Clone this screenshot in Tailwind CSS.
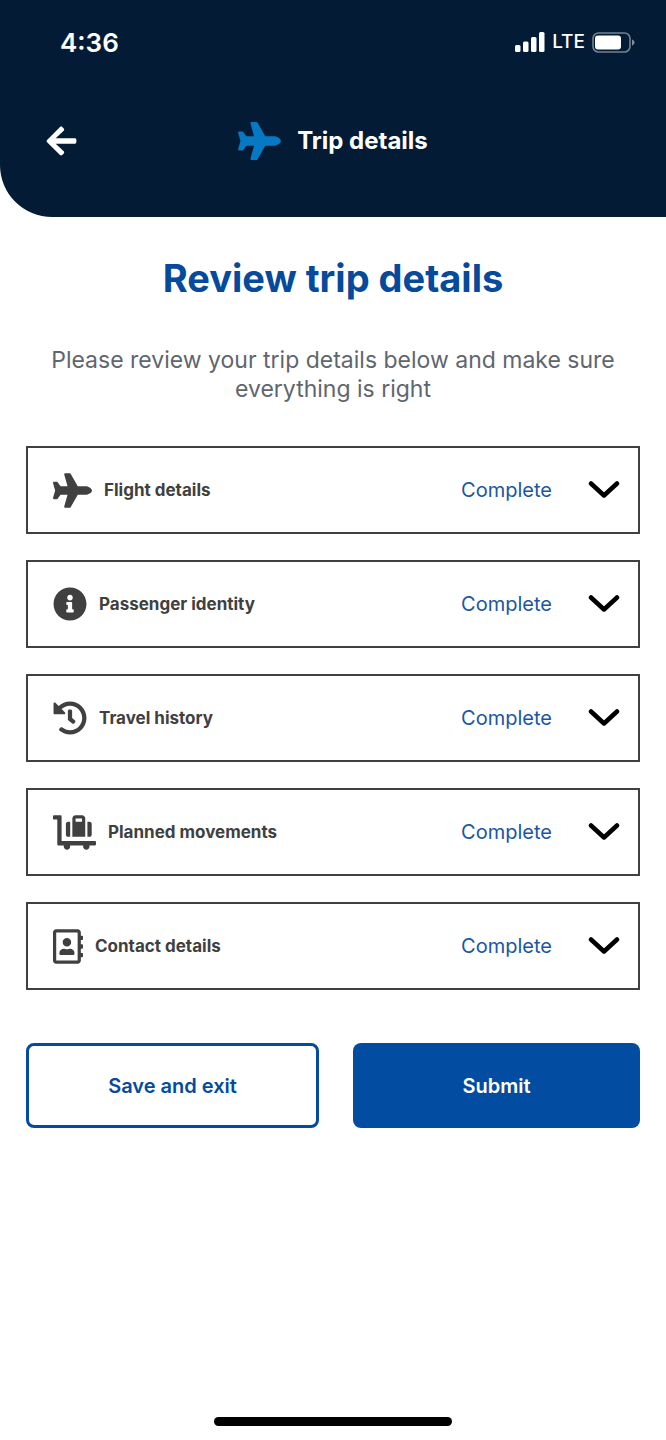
<!DOCTYPE html>
<html lang="en">

<head>
    <meta charset="UTF-8">
    <meta name="viewport" content="width=device-width, initial-scale=1.0">
    <script src="https://cdn.jsdelivr.net/npm/@tailwindcss/browser@4"></script>
    <title>Trip details</title>
</head>

<body class="font-['Inter',sans-serif] bg-white">

    <!-- shared icon shapes -->
    <svg class="hidden">
        <symbol id="plane" viewBox="0 0 576 512">
            <path d="M480 192H365.71L260.61 8.06A16.014 16.014 0 0 0 246.71 0h-65.5c-10.63 0-18.3 10.17-15.38 20.39L214.86 192H112l-43.2-57.6c-3.02-4.03-7.77-6.4-12.8-6.4H16.01C5.6 128-2.04 137.78.49 147.88L32 256 .49 364.12C-2.04 374.22 5.6 384 16.01 384H56c5.04 0 9.78-2.37 12.8-6.4L112 320h102.86l-49.03 171.6c-2.92 10.22 4.75 20.4 15.38 20.4h65.5c5.74 0 11.04-3.08 13.89-8.06L365.71 320H480c35.35 0 96-28.65 96-64s-60.65-64-96-64z" />
        </symbol>
        <symbol id="chevron" viewBox="0 0 32 18">
            <path d="M3 2.500l13 12L29 2.500" fill="none" stroke="currentColor" stroke-width="4.500" stroke-linecap="round" stroke-linejoin="round" />
        </symbol>
    </svg>

    <div class="flex flex-col min-h-screen">
        <header class="bg-[#041b35] text-white rounded-bl-[52px] pt-6 pb-14">
            <div class="flex items-center justify-between pl-[60px] pr-[31px] h-9">
                <span class="text-[26px] font-semibold">4:36</span>
                <div class="flex items-center gap-[7px]">
                    <svg class="w-[30px] h-5" viewBox="0 0 30 20" fill="currentColor">
                        <rect x="0" y="13" width="5.5" height="7" rx="1.5" />
                        <rect x="8" y="9.5" width="5.5" height="10.5" rx="1.5" />
                        <rect x="16" y="5" width="5.5" height="15" rx="1.5" />
                        <rect x="24" y="0" width="5.5" height="20" rx="1.5" />
                    </svg>
                    <span class="text-[19px] leading-7 font-medium">LTE</span>
                    <svg class="w-[43px] h-[21px]" viewBox="0 0 43 21">
                        <rect x="1" y="1" width="37" height="19" rx="5.5" fill="none" stroke="#fff" stroke-opacity=".45" stroke-width="1.6" />
                        <rect x="3" y="3.5" width="26" height="14" rx="3" fill="#fff" />
                        <path d="M40 7.5c1.6.6 2.5 1.7 2.5 3s-.9 2.4-2.5 3z" fill="#fff" fill-opacity=".5" />
                    </svg>
                </div>
            </div>

            <div class="grid grid-cols-[1fr_auto_1fr] items-center mt-[60px] px-[46px] h-[41px]">
                <button type="button" aria-label="Back" class="justify-self-start">
                    <svg class="w-[31px] h-[34px]" viewBox="0 0 448 512" fill="currentColor">
                        <path d="M257.5 445.1l-22.2 22.2c-9.4 9.4-24.6 9.4-33.9 0L7 273c-9.4-9.4-9.4-24.6 0-33.9L201.4 44.7c9.4-9.4 24.6-9.4 33.9 0l22.2 22.2c9.5 9.5 9.3 25-.4 34.3L136.6 216H424c13.3 0 24 10.7 24 24v32c0 13.3-10.7 24-24 24H136.6l120.5 114.8c9.8 9.3 10 24.8.4 34.3z" />
                    </svg>
                </button>
                <div class="flex items-center gap-4">
                    <svg class="w-[43px] h-[38px] text-[#0679c5]" fill="currentColor"><use href="#plane" /></svg>
                    <span class="text-2xl font-bold">Trip details</span>
                </div>
            </div>
        </header>

        <main class="px-[26px] pt-[38px]">
            <h1 class="text-center text-[38px] leading-[46px] font-bold text-[#054a9c]">Review trip details</h1>
            <p class="text-center text-[23px] leading-[29px] text-[#5f666d] mt-[45px] px-4">Please review your trip details below and make sure everything is right</p>

            <div class="flex flex-col gap-[26px] mt-[42px]">
                <button type="button" class="flex items-center h-[88px] border-2 border-[#404040] pl-[25px] pr-[18px] text-[#404040]">
                    <svg class="w-[39px] h-[35px]" fill="currentColor"><use href="#plane" /></svg>
                    <span class="ml-3 text-[17px] leading-6 font-bold">Flight details</span>
                    <span class="ml-auto text-xl text-[#1a56a2]">Complete</span>
                    <svg class="ml-9 w-8 h-[18px] text-black"><use href="#chevron" /></svg>
                </button>

                <button type="button" class="flex items-center h-[88px] border-2 border-[#404040] pl-[25px] pr-[18px] text-[#404040]">
                    <svg class="w-[34px] h-[34px]" viewBox="0 0 512 512" fill="currentColor">
                        <path d="M256 8C119.043 8 8 119.083 8 256c0 136.997 111.043 248 248 248s248-111.003 248-248C504 119.083 392.957 8 256 8zm0 110c23.196 0 42 18.804 42 42s-18.804 42-42 42-42-18.804-42-42 18.804-42 42-42zm56 254c0 6.627-5.373 12-12 12h-88c-6.627 0-12-5.373-12-12v-24c0-6.627 5.373-12 12-12h12v-64h-12c-6.627 0-12-5.373-12-12v-24c0-6.627 5.373-12 12-12h64c6.627 0 12 5.373 12 12v100h12c6.627 0 12 5.373 12 12v24z" />
                    </svg>
                    <span class="ml-3 text-[17px] leading-6 font-bold">Passenger identity</span>
                    <span class="ml-auto text-xl text-[#1a56a2]">Complete</span>
                    <svg class="ml-9 w-8 h-[18px] text-black"><use href="#chevron" /></svg>
                </button>

                <button type="button" class="flex items-center h-[88px] border-2 border-[#404040] pl-[25px] pr-[18px] text-[#404040]">
                    <svg class="w-[34px] h-[34px]" viewBox="0 0 512 512" fill="currentColor">
                        <path d="M504 255.531c.253 136.64-111.18 248.372-247.82 248.468-59.015.042-113.223-20.53-155.822-54.911-11.077-8.94-11.905-25.541-1.839-35.607l11.267-11.267c8.609-8.609 22.353-9.551 31.891-1.984C173.062 425.135 212.781 440 256 440c101.705 0 184-82.311 184-184 0-101.705-82.311-184-184-184-48.814 0-93.149 18.969-126.068 49.932l50.754 50.754c10.08 10.08 2.941 27.314-11.313 27.314H24c-8.837 0-16-7.163-16-16V38.627c0-14.254 17.234-21.393 27.314-11.314l49.372 49.372C129.209 34.136 189.552 8 256 8c136.81 0 247.747 110.78 248 247.531zm-180.912 78.784l9.823-12.63c8.138-10.463 6.253-25.542-4.21-33.679L288 256.349V152c0-13.255-10.745-24-24-24h-16c-13.255 0-24 10.745-24 24v135.651l65.409 50.874c10.463 8.137 25.541 6.253 33.679-4.21z" />
                    </svg>
                    <span class="ml-3 text-[17px] leading-6 font-bold">Travel history</span>
                    <span class="ml-auto text-xl text-[#1a56a2]">Complete</span>
                    <svg class="ml-9 w-8 h-[18px] text-black"><use href="#chevron" /></svg>
                </button>

                <button type="button" class="flex items-center h-[88px] border-2 border-[#404040] pl-[25px] pr-[18px] text-[#404040]">
                    <svg class="w-[43px] h-[35px]" viewBox="0 0 640 512" fill="currentColor">
                        <path d="M224 320h32V96h-32c-17.67 0-32 14.33-32 32v160c0 17.67 14.33 32 32 32zm352-32V128c0-17.67-14.33-32-32-32h-32v224h32c17.67 0 32-14.33 32-32zm48 96H128V16c0-8.84-7.16-16-16-16H16C7.16 0 0 7.16 0 16v32c0 8.84 7.16 16 16 16h48v368c0 8.84 7.16 16 16 16h82.94c-1.79 5.03-2.94 10.36-2.94 16 0 26.51 21.49 48 48 48s48-21.49 48-48c0-5.64-1.15-10.97-2.94-16h197.88c-1.79 5.03-2.94 10.36-2.94 16 0 26.51 21.49 48 48 48s48-21.49 48-48c0-5.64-1.15-10.97-2.94-16H624c8.84 0 16-7.16 16-16v-32c0-8.84-7.16-16-16-16zM480 96V48c0-26.51-21.49-48-48-48h-96c-26.51 0-48 21.49-48 48v272h192V96zm-48 0h-96V48h96v48z" />
                    </svg>
                    <span class="ml-3 text-[17px] leading-6 font-bold">Planned movements</span>
                    <span class="ml-auto text-xl text-[#1a56a2]">Complete</span>
                    <svg class="ml-9 w-8 h-[18px] text-black"><use href="#chevron" /></svg>
                </button>

                <button type="button" class="flex items-center h-[88px] border-2 border-[#404040] pl-[25px] pr-[18px] text-[#404040]">
                    <svg class="w-[30px] h-[35px]" viewBox="0 0 448 512" fill="currentColor">
                        <path d="M436 160c6.6 0 12-5.4 12-12v-40c0-6.6-5.4-12-12-12h-20V48c0-26.5-21.5-48-48-48H48C21.5 0 0 21.5 0 48v416c0 26.5 21.5 48 48 48h320c26.5 0 48-21.5 48-48v-48h20c6.6 0 12-5.4 12-12v-40c0-6.6-5.4-12-12-12h-20v-64h20c6.6 0 12-5.4 12-12v-40c0-6.6-5.4-12-12-12h-20v-64h20zm-68 304H48V48h320v416zM208 256c35.3 0 64-28.7 64-64s-28.7-64-64-64-64 28.7-64 64 28.7 64 64 64zm-89.6 128h179.2c12.4 0 22.4-8.6 22.4-19.2v-19.2c0-31.8-30.1-57.6-67.2-57.6-10.8 0-18.7 8-44.8 8-26.9 0-33.4-8-44.8-8-37.1 0-67.2 25.8-67.2 57.6v19.2c0 10.6 10 19.2 22.4 19.2z" />
                    </svg>
                    <span class="ml-3 text-[17px] leading-6 font-bold">Contact details</span>
                    <span class="ml-auto text-xl text-[#1a56a2]">Complete</span>
                    <svg class="ml-9 w-8 h-[18px] text-black"><use href="#chevron" /></svg>
                </button>
            </div>

            <div class="flex gap-[34px] mt-[53px] h-[85px] text-xl font-semibold">
                <button type="button" class="flex-1 border-3 border-[#054a9c] rounded-lg text-[#054a9c]">Save and exit</button>
                <button type="button" class="flex-1 rounded-lg bg-[#024ca1] text-white">Submit</button>
            </div>
        </main>

        <!-- home indicator -->
        <div class="mt-auto mb-[14px] mx-auto w-[238px] h-[9px] rounded-full bg-black"></div>
    </div>
</body>

</html>
